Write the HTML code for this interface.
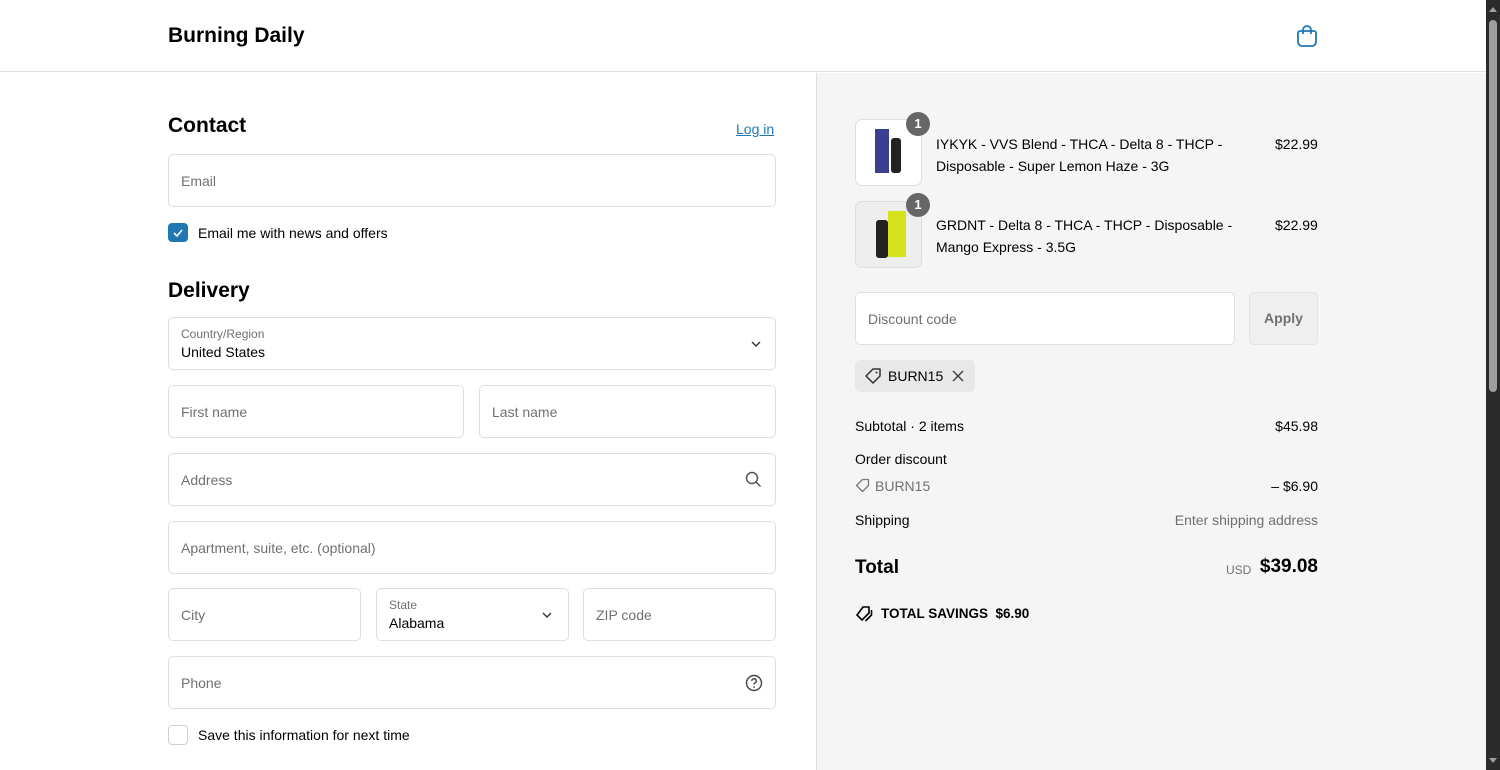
<!DOCTYPE html>
<html><head><meta charset="utf-8"><style>
*{box-sizing:border-box;margin:0;padding:0}
body{width:1500px;height:770px;overflow:hidden;background:#fff;font-family:"Liberation Sans",sans-serif;color:#000;position:relative;font-size:14px}
.a{position:absolute}
.f{position:absolute;border:1px solid #dedede;border-radius:5px;background:#fff;height:53px}
.ph{position:absolute;left:12px;top:18px;color:#707070;font-size:14px}
.lb{position:absolute;left:12px;top:9px;color:#707070;font-size:12px}
.vl{position:absolute;left:12px;top:26px;font-size:14px;color:#000}
h2{position:absolute;font-size:21px;font-weight:bold}
.g{color:#707070}
</style></head><body>
<div class="a" style="left:0;top:0;width:1486px;height:72px;border-bottom:1px solid #dedede;background:#fff"></div>
<div class="a" style="left:168px;top:24px;font-size:21px;font-weight:bold">Burning Daily</div>
<svg class="a" style="left:1295px;top:23px" width="24" height="26" viewBox="0 0 24 26"><path d="M8 11V7a4 4 0 0 1 8 0v4" fill="none" stroke="#1f78b4" stroke-width="1.8"/><path d="M5 8h14a2 2 0 0 1 2 2v9a4 4 0 0 1-4 4H7a4 4 0 0 1-4-4v-9a2 2 0 0 1 2-2z" fill="none" stroke="#1f78b4" stroke-width="1.8" stroke-linejoin="round"/></svg>
<div class="a" style="left:816px;top:73px;width:670px;height:697px;background:#f5f5f5;border-left:1px solid #dedede"></div>
<div class="a" style="left:1486px;top:0;width:14px;height:770px;background:#2b2b2b"></div>
<div class="a" style="left:1489px;top:20px;width:8px;height:372px;background:#9f9f9f;border-radius:4px"></div>
<div class="a" style="left:1489px;top:7px;width:0;height:0;border-left:4px solid transparent;border-right:4px solid transparent;border-bottom:5px solid #9f9f9f"></div>
<div class="a" style="left:1489px;top:758px;width:0;height:0;border-left:4px solid transparent;border-right:4px solid transparent;border-top:5px solid #9f9f9f"></div>

<h2 style="left:168px;top:114px">Contact</h2>
<div class="a" style="left:736px;top:121px;color:#1f78b4;text-decoration:underline">Log in</div>
<div class="f" style="left:168px;top:154px;width:608px"><span class="ph">Email</span></div>
<div class="a" style="left:168px;top:223px;width:20px;height:19px;background:#1f78b4;border-radius:4px"><svg width="20" height="19"><path d="M6 10l3 3 5-6" fill="none" stroke="#fff" stroke-width="1.6"/></svg></div>
<div class="a" style="left:198px;top:225px">Email me with news and offers</div>

<h2 style="left:168px;top:279px">Delivery</h2>
<div class="f" style="left:168px;top:317px;width:608px"><span class="lb">Country/Region</span><span class="vl">United States</span>
<svg class="a" style="right:14px;top:22px" width="10" height="8"><path d="M1 2l4 4 4-4" fill="none" stroke="#333" stroke-width="1.4"/></svg></div>
<div class="f" style="left:168px;top:385px;width:296px"><span class="ph">First name</span></div>
<div class="f" style="left:479px;top:385px;width:297px"><span class="ph">Last name</span></div>
<div class="f" style="left:168px;top:453px;width:608px"><span class="ph">Address</span>
<svg class="a" style="right:13px;top:17px" width="17" height="17"><circle cx="7" cy="7" r="5.5" fill="none" stroke="#555" stroke-width="1.5"/><path d="M11 11l4.5 4.5" stroke="#555" stroke-width="1.5"/></svg></div>
<div class="f" style="left:168px;top:521px;width:608px"><span class="ph">Apartment, suite, etc. (optional)</span></div>
<div class="f" style="left:168px;top:588px;width:193px"><span class="ph">City</span></div>
<div class="f" style="left:376px;top:588px;width:193px"><span class="lb">State</span><span class="vl">Alabama</span>
<svg class="a" style="right:16px;top:22px" width="10" height="8"><path d="M1 2l4 4 4-4" fill="none" stroke="#333" stroke-width="1.4"/></svg></div>
<div class="f" style="left:583px;top:588px;width:193px"><span class="ph">ZIP code</span></div>
<div class="f" style="left:168px;top:656px;width:608px"><span class="ph">Phone</span>
<svg class="a" style="right:12px;top:17px" width="18" height="18"><circle cx="9" cy="9" r="7.5" fill="none" stroke="#444" stroke-width="1.4"/><path d="M6.8 7a2.2 2.2 0 1 1 3 2c-.7.3-.8.8-.8 1.5" fill="none" stroke="#444" stroke-width="1.4"/><circle cx="9" cy="13" r=".9" fill="#444"/></svg></div>
<div class="a" style="left:168px;top:725px;width:20px;height:20px;border:1px solid #cfcfcf;border-radius:4px;background:#fff"></div>
<div class="a" style="left:198px;top:727px">Save this information for next time</div>

<!-- right -->
<div class="a" style="left:855px;top:119px;width:67px;height:67px;border:1px solid #dedede;border-radius:7px;background:#fff">
 <div class="a" style="left:19px;top:9px;width:14px;height:44px;background:#3b3f8f"></div>
 <div class="a" style="left:35px;top:18px;width:10px;height:35px;background:#222;border-radius:3px"></div></div>
<div class="a" style="left:906px;top:112px;width:24px;height:24px;border-radius:12px;background:#666;color:#fff;font-weight:bold;font-size:13px;text-align:center;line-height:24px">1</div>
<div class="a" style="left:936px;top:133px;line-height:22px">IYKYK - VVS Blend - THCA - Delta 8 - THCP -<br>Disposable - Super Lemon Haze - 3G</div>
<div class="a" style="left:1275px;top:133px;line-height:22px">$22.99</div>

<div class="a" style="left:855px;top:201px;width:67px;height:67px;border:1px solid #dedede;border-radius:7px;background:#eee">
 <div class="a" style="left:20px;top:18px;width:12px;height:38px;background:#222;border-radius:3px"></div>
 <div class="a" style="left:32px;top:9px;width:18px;height:46px;background:#d6e21c"></div></div>
<div class="a" style="left:906px;top:193px;width:24px;height:24px;border-radius:12px;background:#666;color:#fff;font-weight:bold;font-size:13px;text-align:center;line-height:24px">1</div>
<div class="a" style="left:936px;top:214px;line-height:22px">GRDNT - Delta 8 - THCA - THCP - Disposable -<br>Mango Express - 3.5G</div>
<div class="a" style="left:1275px;top:214px;line-height:22px">$22.99</div>

<div class="f" style="left:855px;top:292px;width:380px"><span class="ph">Discount code</span></div>
<div class="a" style="left:1249px;top:292px;width:69px;height:53px;border:1px solid #e3e3e3;border-radius:5px;background:#efefef;color:#707070;font-weight:bold;text-align:center;line-height:51px">Apply</div>
<div class="a" style="left:855px;top:360px;width:120px;height:32px;border-radius:5px;background:#e8e8e8"></div>
<svg class="a" style="left:864px;top:367px" width="18" height="18"><path d="M9 2h7v7l-7 7-7-7z" fill="none" stroke="#333" stroke-width="1.5" stroke-linejoin="round"/><circle cx="12.5" cy="5.5" r="1" fill="#333"/></svg>
<div class="a" style="left:888px;top:368px">BURN15</div>
<svg class="a" style="left:951px;top:369px" width="14" height="14"><path d="M2 2l10 10M12 2L2 12" stroke="#444" stroke-width="1.5"/></svg>

<div class="a" style="left:855px;top:418px">Subtotal · 2 items</div>
<div class="a" style="right:182px;top:418px">$45.98</div>
<div class="a" style="left:855px;top:451px">Order discount</div>
<svg class="a" style="left:855px;top:478px" width="15" height="15"><path d="M7.5 1.5h6v6l-6 6-6-6z" fill="none" stroke="#777" stroke-width="1.3" stroke-linejoin="round"/></svg>
<div class="a g" style="left:875px;top:478px">BURN15</div>
<div class="a" style="right:182px;top:478px">– $6.90</div>
<div class="a" style="left:855px;top:512px">Shipping</div>
<div class="a g" style="right:182px;top:512px">Enter shipping address</div>
<div class="a" style="left:855px;top:557px;font-size:19px;font-weight:bold">Total</div>
<div class="a g" style="left:1226px;top:563px;font-size:12px">USD</div>
<div class="a" style="right:182px;top:556px;font-size:19px;font-weight:bold">$39.08</div>
<svg class="a" style="left:855px;top:605px" width="19" height="18"><path d="M8 2h6v6l-7 7-5-5z" fill="none" stroke="#000" stroke-width="1.6" stroke-linejoin="round"/><path d="M16.5 5v5l-6 6" fill="none" stroke="#000" stroke-width="1.6"/></svg>
<div class="a" style="left:881px;top:606px;font-weight:bold;font-size:13.5px">TOTAL SAVINGS&nbsp; $6.90</div>
</body></html>
